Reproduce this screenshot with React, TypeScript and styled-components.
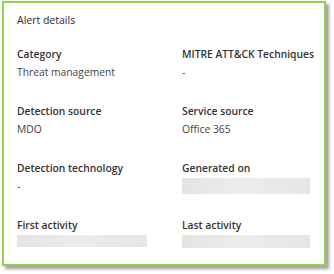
import styled, { createGlobalStyle } from 'styled-components';

const GlobalStyle = createGlobalStyle`
  html, body {
    margin: 0;
    padding: 0;
    background: #ffffff;
  }
  body {
    font-family: "Open Sans", "Noto Sans", "Liberation Sans", sans-serif;
  }
`

const Page = styled.div`
  width: 334px;
  height: 274px;
  padding: 1px 0 0 2px;
  box-sizing: border-box;
`

const Card = styled.div`
  width: 324px;
  height: 265px;
  box-sizing: border-box;
  border: 2px solid #92d050;
  background: #fff;
  box-shadow: 3px 3px 3px rgba(0, 0, 0, 0.38);
  padding: 10px 0 0 13px;
`

const Title = styled.div`
  font-size: 10.5px;
  color: #2b2b2b;
  line-height: 14px;
  margin-bottom: 20px;
`

const Grid = styled.div`
  display: grid;
  grid-template-columns: 165px 140px;
  row-gap: 20px;
`

const Field = styled.div`
  display: flex;
  flex-direction: column;
  height: 37px;
`

const Label = styled.div`
  font-size: 10.3px;
  font-weight: 600;
  color: #333;
  line-height: 14px;
  margin-bottom: 4px;
  white-space: nowrap;
`

const Value = styled.div`
  font-size: 10.3px;
  color: #444;
  line-height: 14px;
`

const Placeholder = styled.div<{ $w: number; $h: number }>`
  width: ${p => p.$w}px;
  height: ${p => p.$h}px;
  margin-top: -1px;
  background: linear-gradient(90deg, #e4e4e4, #ececec 45%, #e6e6e6);
`

type Item = { label: string; value?: string; bar?: [number, number] }

const items: Item[] = [
  { label: 'Category', value: 'Threat management' },
  { label: 'MITRE ATT&CK Techniques', value: '-' },
  { label: 'Detection source', value: 'MDO' },
  { label: 'Service source', value: 'Office 365' },
  { label: 'Detection technology', value: '-' },
  { label: 'Generated on', bar: [128, 16] },
  { label: 'First activity', bar: [130, 12] },
  { label: 'Last activity', bar: [128, 13] },
]

export default function App() {
  return (
    <Page>
      <GlobalStyle />
      <Card>
        <Title>Alert details</Title>
        <Grid>
          {items.map(it => (
            <Field key={it.label}>
              <Label>{it.label}</Label>
              {it.bar
                ? <Placeholder $w={it.bar[0]} $h={it.bar[1]} />
                : <Value>{it.value}</Value>}
            </Field>
          ))}
        </Grid>
      </Card>
    </Page>
  )
}
